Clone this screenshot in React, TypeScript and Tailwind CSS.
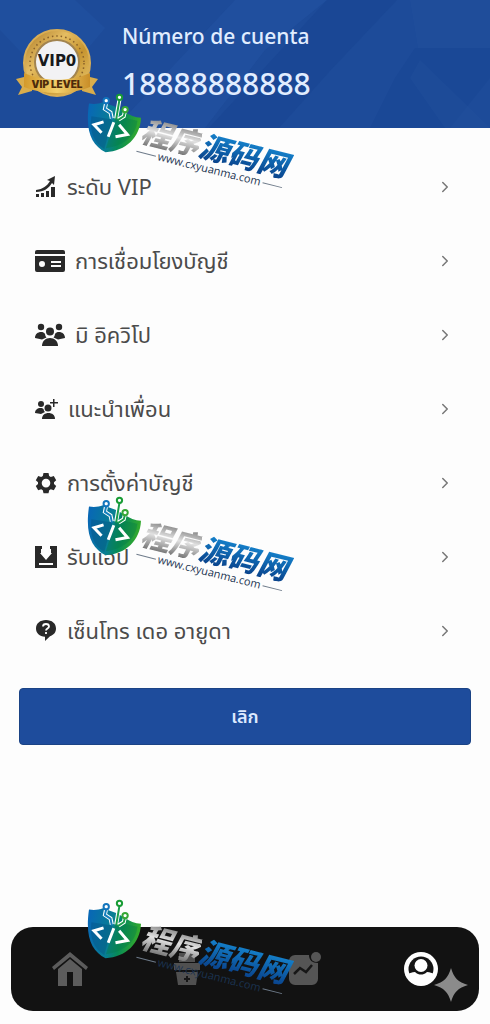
import type { ReactNode } from "react";
import { FiChevronRight } from "react-icons/fi";

const GrowthIcon = () => (
  <svg viewBox="0 0 22 22" className="h-[22px] w-[22px]" fill="currentColor" aria-hidden="true">
    <path d="M1 18h3v3H1zM6 17h3v4H6zM11 15h3v6h-3zM16 11h4v10h-4z" />
    <path d="M1 14c7-1 11-4 14-9l-3-1 8-4-1 9-2-2C14 12 9 16 1 16z" />
  </svg>
);

const CardIcon = () => (
  <svg viewBox="0 0 30 22" className="h-[22px] w-[30px]" fill="currentColor" aria-hidden="true">
    <path d="M2 0h26a2 2 0 0 1 2 2v2H0V2a2 2 0 0 1 2-2z" />
    <path
      fillRule="evenodd"
      d="M0 6h30v14a2 2 0 0 1-2 2H2a2 2 0 0 1-2-2zM7 11a3 3 0 1 0 0 6 3 3 0 0 0 0-6zM16 11v2h10v-2zM16 15v2h10v-2z"
    />
  </svg>
);

const TeamIcon = () => (
  <svg viewBox="0 0 30 24" className="h-6 w-[30px]" fill="currentColor" aria-hidden="true">
    <circle cx="6" cy="4" r="3.2" />
    <circle cx="24" cy="4" r="3.2" />
    <circle cx="15" cy="8.5" r="4" />
    <path d="M0 15c0-4 3-6 6-6 2 0 3 .6 4 2 .2 2 1 3 1.500 3.500L7 16.500z" />
    <path d="M30 15c0-4-3-6-6-6-2 0-3 .6-4 2-.2 2-1 3-1.500 3.500l4.500 2z" />
    <path d="M7 23c0-5 3.500-8 8-8s8 3 8 8z" />
  </svg>
);

const InviteIcon = () => (
  <svg viewBox="0 0 23 23" className="h-[23px] w-[23px]" fill="currentColor" aria-hidden="true">
    <circle cx="6" cy="6" r="3" />
    <circle cx="13" cy="10" r="3.5" />
    <path d="M0 15c0-3 2.500-5 5.500-5 1.500 0 2.500.5 3 1 .3 1.500.8 2.500 1.500 3L6 16z" />
    <path d="M7 21c0-4 3-6 6.500-6s6.500 2 6.500 6z" />
    <path d="M18 1h1.500v3H23v1.500h-3.500V9H18V5.500h-3V4h3z" />
  </svg>
);

const GearIcon = () => (
  <svg viewBox="0 0 22 22" className="h-[22px] w-[22px]" fill="currentColor" aria-hidden="true">
    <path
      fillRule="evenodd"
      d="M8.500 1h5l.7 3 1.600 1 3-1 2.400 4.300L19 10.300v1.800l2.200 1.900-2.400 4.300-3-1-1.600 1-.7 3h-5l-.7-3-1.600-1-3 1L.8 14 3 12.100v-1.800L.8 8.300 3.200 4l3 1 1.600-1zM11 6.800a4.300 4.300 0 1 0 0 8.600 4.300 4.300 0 0 0 0-8.600z"
    />
  </svg>
);

const DownloadIcon = () => (
  <svg viewBox="0 0 22 22" className="h-[22px] w-[22px]" aria-hidden="true">
    <path fill="currentColor" d="M0 0h7v3H6v4h3l2 3 2-3h3V3h-1V0h7v22H0z" />
    <path fill="#fff" d="M5 7h4V2h4v5h4l-6 7zM4 17h14v2H4z" />
  </svg>
);

const HelpIcon = () => (
  <svg viewBox="0 0 22 22" className="h-[22px] w-[22px]" aria-hidden="true">
    <path
      fill="currentColor"
      d="M11 0c6 0 10 3.500 10 8.500 0 4-2.500 6.500-6 7.700L10 21v-4.300C4.500 16.500 1 13 1 8.500 1 3.500 5 0 11 0z"
    />
    <path fill="none" stroke="#fff" strokeWidth="1.800" d="M8 6.500C8 4.500 9.300 4 11 4s3 .8 3 2.500c0 2-3 2-3 4M11 12v2" />
  </svg>
);

const HomeIcon = () => (
  <svg viewBox="0 0 36 34" className="h-[34px] w-9" fill="#5c5c5c" aria-hidden="true">
    <path d="M18 0l18 15-2 3L18 5 2 18l-2-3z" />
    <path d="M18 7l12 10v17h-9V20h-6v14H6V17z" />
  </svg>
);

const GiftIcon = () => (
  <svg viewBox="0 0 30 34" className="h-[34px] w-[30px]" aria-hidden="true">
    <path fill="#505050" d="M7 1h6l2 3 2-3h6v9H7zM2 11h26v7H2zM4 20h22l-2 13H6z" />
    <path fill="#171717" d="M14 24h2v2h2v2h-2v2h-2v-2h-2v-2h2z" />
  </svg>
);

const ChartIcon = () => (
  <svg viewBox="0 0 34 34" className="h-[34px] w-[34px]" aria-hidden="true">
    <path fill="#555" d="M8 3h14c0 5 3 8 9 8v16a6 6 0 0 1-6 6H8a6 6 0 0 1-6-6V9a6 6 0 0 1 6-6z" />
    <circle cx="29" cy="5" r="5" fill="#555" />
    <path fill="none" stroke="#171717" strokeWidth="2.500" d="M7 22l6-6 6 4 6-7" />
  </svg>
);

const ProfileIcon = () => (
  <svg viewBox="0 0 34 34" className="h-[34px] w-[34px]" aria-hidden="true">
    <circle cx="17" cy="17" r="17" fill="#fff" />
    <circle cx="17" cy="17" r="12.5" fill="#151515" />
    <circle cx="17" cy="13.500" r="6.5" fill="#fff" />
    <path fill="#fff" d="M4 22c2-1 4-2 7-2 2 2 4 2.500 6 2.500s4-.5 6-2.500c3 0 5 1 7 2l-4 8H8z" />
  </svg>
);

const VipBadge = () => (
  <svg viewBox="0 0 84 72" className="h-[72px] w-[84px] shrink-0" role="img" aria-label="VIP0 VIP level">
    <defs>
      <linearGradient id="gold" x1="0" y1="0" x2="1" y2="1">
        <stop offset="0" stopColor="#a87522" />
        <stop offset=".35" stopColor="#e5bd62" />
        <stop offset=".6" stopColor="#c6942f" />
        <stop offset="1" stopColor="#efd079" />
      </linearGradient>
      <linearGradient id="ribbon" x1="0" x2="1">
        <stop offset="0" stopColor="#d49a2b" />
        <stop offset=".5" stopColor="#f2cf6c" />
        <stop offset="1" stopColor="#c98e28" />
      </linearGradient>
    </defs>
    <path fill="#d9ad4c" d="M0 51l16-4v16l-14 4 4-8zM82 51l-16-4v16l14 4-4-8z" />
    <circle cx="41" cy="35" r="33" fill="url(#gold)" stroke="#d9ae55" strokeWidth="2" />
    <circle cx="41" cy="35" r="27" fill="none" stroke="#896129" strokeWidth="1.500" strokeDasharray="1.500 3" />
    <circle cx="41" cy="34" r="22" fill="#f2f2f4" stroke="#a28450" strokeWidth="2" />
    <path fill="url(#ribbon)" d="M8 45c20 9 46 9 66 0v14c-20 8-46 8-66 0z" />
    <text x="41" y="38" textAnchor="middle" fill="#17191c" className="font-['DejaVu_Sans'] text-[15px] font-bold">
      VIP0
    </text>
    <text x="41" y="60" textAnchor="middle" fill="#4d2b0b" className="font-['Inter'] text-[10px] font-black">
      VIP LEVEL
    </text>
  </svg>
);

const HeaderPattern = () => (
  <svg
    viewBox="0 0 490 128"
    preserveAspectRatio="none"
    className="absolute inset-0 h-full w-full"
    aria-hidden="true"
  >
    <path fill="#2455a4" opacity=".4" d="M0 0h75l30 28-50 60L0 30z" />
    <path fill="#2454a4" opacity=".5" d="M235 0h92l-62 50-60 78h-90z" />
    <path fill="#174491" opacity=".5" d="M327 0h70l-68 72-50 56h-70z" />
    <path fill="#174491" opacity=".4" d="M415 48h75v30l-40 50h-80l25-50z" />
    <path fill="#2353a0" opacity=".3" d="M410 0h80v48h-72zM420 60l70 68h-45l-35-50z" />
  </svg>
);

const Shield = ({ id }: { id: string }) => (
  <svg viewBox="20 25 166 184" className="h-[61px] w-[55px] shrink-0" aria-hidden="true">
    <defs>
      <linearGradient id={id} x1="0" y1=".3" x2="1" y2=".5">
        <stop offset="0" stopColor="#0868b5" />
        <stop offset=".45" stopColor="#087f92" />
        <stop offset=".65" stopColor="#078b58" />
        <stop offset="1" stopColor="#38ad28" />
      </linearGradient>
    </defs>
    <path fill={`url(#${id})`} d="M26 57c16 2 30 1 42-4l40 14 25 14c15 12 32 18 50 19-3 60-45 100-107 104-42-22-62-63-50-147z" />
    <path fill="#064f83" opacity=".4" d="M33 95l64 10-25 89c-33-22-44-50-39-99z" />
    <path fill="#057a45" opacity=".4" d="M108 95l64 14c-5 43-33 73-95 83z" />
    <g fill="none" stroke="#fff" strokeWidth="12">
      <path d="M78 53l-4 20 17 11 4 18M118 44l-10 58M135 78l-4 17-16 10" />
    </g>
    <g fill="none" stroke="#1b9d4c" strokeWidth="6">
      <path stroke="#1680bd" d="M78 56l-4 17 17 11 4 21" />
      <path d="M118 45l-10 60M135 80l-4 15-18 12" />
    </g>
    <g fill="#fff" strokeWidth="6">
      <circle cx="78" cy="48" r="8" stroke="#1275bd" />
      <circle cx="118" cy="38" r="8" stroke="#189c35" />
      <circle cx="135" cy="75" r="8" stroke="#35a735" />
    </g>
    <path fill="none" stroke="#fff" strokeWidth="9" d="M70 112l-29 9 23 24M101 113l-17 44M117 121l25 29-36 7" />
  </svg>
);

const Watermark = ({ id, className }: { id: string; className: string }) => (
  <div className={`pointer-events-none absolute left-[87px] flex ${className}`}>
    <Shield id={id} />
    <div className="ml-1 mt-5 origin-top-left rotate-[14deg]">
      <div className="flex text-[30px] font-black italic leading-8 font-['Noto_Sans_CJK_SC',sans-serif]">
        <span className="bg-linear-to-b from-[#777] via-[#e2e2e2] to-[#777] bg-clip-text text-transparent">
          程序
        </span>
        <span className="bg-linear-to-b from-[#1788d2] to-[#0a438c] bg-clip-text pr-1 text-transparent">源码网</span>
      </div>
      <div className="flex items-center gap-[2px] text-[11px] leading-[14px] text-[#1b3350] font-['Open_Sans',sans-serif]">
        <span className="h-px w-5 bg-[#6e7b8a]" />
        www.cxyuanma.com
        <span className="h-px w-5 bg-[#6e7b8a]" />
      </div>
    </div>
  </div>
);

type MenuItem = { label: string; icon: ReactNode };

const menu: MenuItem[] = [
  { label: "ระดับ VIP", icon: <GrowthIcon /> },
  { label: "การเชื่อมโยงบัญชี", icon: <CardIcon /> },
  { label: "มิ อิควิโป", icon: <TeamIcon /> },
  { label: "แนะนำเพื่อน", icon: <InviteIcon /> },
  { label: "การตั้งค่าบัญชี", icon: <GearIcon /> },
  { label: "รับแอป", icon: <DownloadIcon /> },
  { label: "เซ็นโทร เดอ อายูดา", icon: <HelpIcon /> },
];

const tabs: MenuItem[] = [
  { label: "Home", icon: <HomeIcon /> },
  { label: "Rewards", icon: <GiftIcon /> },
  { label: "Activity", icon: <ChartIcon /> },
  { label: "Profile", icon: <ProfileIcon /> },
];

const App = () => {
  return (
    <div className="relative flex min-h-screen flex-col overflow-hidden bg-[#fdfdfd] font-['Noto_Sans','Noto_Sans_Thai',sans-serif]">
      <header className="relative bg-[#1d4b99]">
        <HeaderPattern />
        <div className="relative flex h-32 items-center gap-[22px] pl-4">
          <VipBadge />
          <div className="pb-1 text-[#e1edff]">
            <p className="text-[21px] font-medium leading-8">Número de cuenta</p>
            <p className="mt-3 text-[30px] font-medium leading-10">18888888888</p>
          </div>
        </div>
      </header>

      <main className="pt-[22px]">
        <ul>
          {menu.map((item) => (
            <li key={item.label}>
              <a href="#" className="flex h-[74px] items-center justify-between pl-[35px] pr-9">
                <span className="flex items-center gap-[10px] text-[22px] text-[#4b4b4b]">
                  <span className="text-[#292929]">{item.icon}</span>
                  <span className="pb-[2px]">{item.label}</span>
                </span>
                <FiChevronRight size={18} color="#777" />
              </a>
            </li>
          ))}
        </ul>
        <div className="px-[19px] pt-5">
          <button className="h-[57px] w-full rounded-sm border border-[#1b4385] bg-[#1e4c9c] text-[18px] font-semibold text-[#dce9ff]">
            เลิก
          </button>
        </div>
      </main>

      <nav className="mx-[11px] mb-[13px] mt-auto grid h-[84px] grid-cols-4 rounded-[22px] bg-[#121212]">
        {tabs.map((tab) => (
          <a key={tab.label} href="#" aria-label={tab.label} className="flex items-center justify-center">
            {tab.icon}
          </a>
        ))}
      </nav>

      <Watermark id="shield-top" className="top-[93px]" />
      <Watermark id="shield-middle" className="top-[496px]" />
      <Watermark id="shield-bottom" className="top-[899px]" />

      <svg
        viewBox="0 0 34 34"
        className="pointer-events-none absolute bottom-[22px] right-[22px] h-[34px] w-[34px]"
        fill="#8b8b8b"
        aria-hidden="true"
      >
        <path d="M17 0c3 10 7 14 17 17-10 3-14 7-17 17C14 24 10 20 0 17c10-3 14-7 17-17z" />
      </svg>
    </div>
  );
};

export default App;
